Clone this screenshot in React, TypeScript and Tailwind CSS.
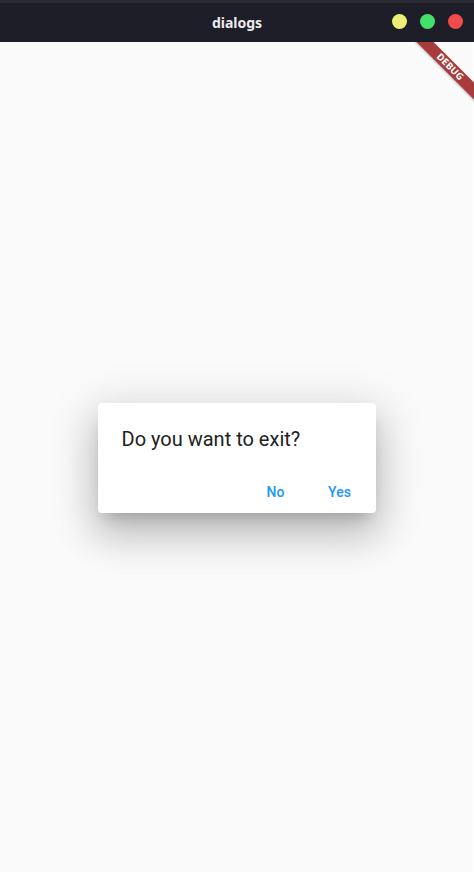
export default function App() {
  return (
    <div className="flex h-[875px] w-full flex-col bg-white">
      {/* Title bar */}
      <div className="relative flex h-[42px] shrink-0 items-center justify-center border-t-[3px] border-[#2a2b33] bg-[#1d1e27]">
        <span className="text-[14px] font-bold text-[#ececec] [font-family:'Noto_Sans',sans-serif]">dialogs</span>
        <div className="absolute right-[11px] top-[11px] flex items-center gap-[13px]">
          <span className="h-[15px] w-[15px] rounded-full bg-[#ecee78]" />
          <span className="h-[15px] w-[15px] rounded-full bg-[#44e06c]" />
          <span className="h-[15px] w-[15px] rounded-full bg-[#f24b4b]" />
        </div>
      </div>

      {/* Body */}
      <div className="relative mb-[3px] mr-px flex flex-1 items-center justify-center bg-[#fafafa] pt-[2px]">
        {/* Debug banner */}
        <div className="absolute right-[-1px] top-0 h-[80px] w-[80px] overflow-hidden">
          <div className="absolute left-[-4px] top-[19px] flex h-[12px] w-[120px] rotate-45 items-center justify-center bg-[#a83c3c] shadow-[0_1px_2px_rgba(0,0,0,0.25)]">
            <span className="text-[9.5px] font-bold leading-none tracking-[0.2px] text-white [font-family:'Noto_Sans',sans-serif]">DEBUG</span>
          </div>
        </div>

        {/* Dialog */}
        <div className="flex w-[278px] flex-col rounded-[4px] bg-white shadow-[0_11px_15px_-7px_rgba(0,0,0,0.2),0_24px_38px_3px_rgba(0,0,0,0.14),0_9px_46px_8px_rgba(0,0,0,0.12)] [font-family:Roboto,sans-serif]">
          <div className="px-6 pt-6 text-[20px] leading-[24px] text-[#212121]">Do you want to exit?</div>
          <div className="mt-[23px] mb-[3px] flex justify-end gap-2 pr-2">
            <button className="flex h-9 w-[56px] items-center justify-center text-[14px] font-medium text-[#2196f3]">No</button>
            <button className="flex h-9 w-[56px] items-center justify-center text-[14px] font-medium text-[#2196f3]">Yes</button>
          </div>
        </div>
      </div>
    </div>
  )
}
